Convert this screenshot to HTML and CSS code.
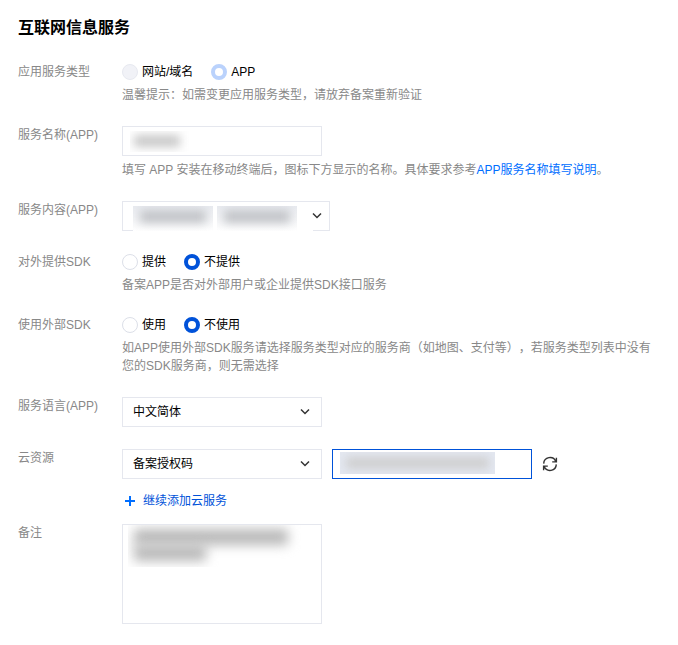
FILE: index.html
```html
<!DOCTYPE html>
<html lang="zh-CN">
<head>
<meta charset="utf-8">
<meta name="viewport" content="width=device-width, initial-scale=1">
<title>互联网信息服务</title>
<link rel="stylesheet" href="styles.css">
</head>
<body>
<form class="form">
  <h1 class="title">互联网信息服务</h1>

  <div class="row" role="radiogroup" aria-labelledby="l-type">
    <span class="label" id="l-type">应用服务类型</span>
    <div class="field">
      <div class="radios">
        <label class="radio"><input type="radio" name="type" disabled>网站/域名</label>
        <label class="radio"><input type="radio" name="type" checked disabled>APP</label>
      </div>
      <p class="hint">温馨提示：如需变更应用服务类型，请放弃备案重新验证</p>
    </div>
  </div>

  <div class="row">
    <label class="label" for="name">服务名称(APP)</label>
    <div class="field">
      <div class="box">
        <input class="control" id="name" type="text">
        <span class="redact redact-name"></span>
      </div>
      <p class="hint">填写 APP 安装在移动终端后，图标下方显示的名称。具体要求参考<a href="#">APP服务名称填写说明</a>。</p>
    </div>
  </div>

  <div class="row">
    <label class="label" for="content">服务内容(APP)</label>
    <div class="field">
      <div class="box box-wide">
        <select class="control" id="content"><option></option></select>
        <span class="tags"><i></i><i></i></span>
        <svg class="chevron" viewBox="0 0 10 8"><path d="M1 1.5 5 5.5 9 1.5"/></svg>
      </div>
    </div>
  </div>

  <div class="row" role="radiogroup" aria-labelledby="l-offer">
    <span class="label" id="l-offer">对外提供SDK</span>
    <div class="field">
      <div class="radios">
        <label class="radio"><input type="radio" name="offer">提供</label>
        <label class="radio"><input type="radio" name="offer" checked>不提供</label>
      </div>
      <p class="hint">备案APP是否对外部用户或企业提供SDK接口服务</p>
    </div>
  </div>

  <div class="row" role="radiogroup" aria-labelledby="l-use">
    <span class="label" id="l-use">使用外部SDK</span>
    <div class="field">
      <div class="radios">
        <label class="radio"><input type="radio" name="use">使用</label>
        <label class="radio"><input type="radio" name="use" checked>不使用</label>
      </div>
      <p class="hint">如APP使用外部SDK服务请选择服务类型对应的服务商（如地图、支付等），若服务类型列表中没有您的SDK服务商，则无需选择</p>
    </div>
  </div>

  <div class="row">
    <label class="label" for="lang">服务语言(APP)</label>
    <div class="field">
      <div class="box">
        <select class="control" id="lang"><option>中文简体</option></select>
        <svg class="chevron" viewBox="0 0 10 8"><path d="M1 1.5 5 5.5 9 1.5"/></svg>
      </div>
    </div>
  </div>

  <div class="row row-tight">
    <label class="label" for="cloud">云资源</label>
    <div class="field">
      <div class="line">
        <div class="box">
          <select class="control" id="cloud"><option>备案授权码</option></select>
          <svg class="chevron" viewBox="0 0 10 8"><path d="M1 1.5 5 5.5 9 1.5"/></svg>
        </div>
        <div class="box">
          <input class="control active" type="text" aria-label="备案授权码">
          <span class="redact redact-code"></span>
        </div>
        <button class="refresh" type="button" aria-label="刷新">
          <svg viewBox="0 0 16 16"><path d="M1.7 7.6A6.3 6.3 0 0 1 13.8 5.4M14.3 8.4A6.3 6.3 0 0 1 2.2 10.6M14.4 1.8v4.1h-4.2M1.6 14.2v-4.1h4.2"/></svg>
        </button>
      </div>
      <button class="add" type="button">
        <svg viewBox="0 0 10 10"><path d="M5 0v10M0 5h10"/></svg>继续添加云服务
      </button>
    </div>
  </div>

  <div class="row">
    <label class="label" for="note">备注</label>
    <div class="field">
      <div class="box">
        <textarea class="control area" id="note"></textarea>
        <span class="smudge"><i></i><i></i></span>
      </div>
    </div>
  </div>
</form>
</body>
</html>
```
FILE: styles.css
```css
* {
  box-sizing: border-box;
}

body {
  margin: 0;
  background: #fff;
  color: #000;
  font: 12px/18px "Liberation Sans", "Noto Sans CJK SC", sans-serif;
  text-spacing-trim: space-all;
}

input,
select,
textarea,
button {
  margin: 0;
  font: inherit;
  color: inherit;
}

.form {
  padding: 16px 18px 21px;
}

.title {
  margin: 0 0 23px;
  font-size: 16px;
  line-height: 24px;
  font-weight: 700;
}

.row {
  display: grid;
  grid-template-columns: 104px minmax(0, 1fr);
  margin-bottom: 22px;
}

.row-tight {
  margin-bottom: 14px;
}

.row:last-child {
  margin-bottom: 0;
}

.label,
.hint {
  color: #888;
}

.hint {
  margin: 5px 0 0;
}

a {
  color: #006eff;
  text-decoration: none;
}

.radios {
  display: flex;
  gap: 18px;
}

.radio {
  display: flex;
  align-items: center;
  gap: 4px;
}

.radio input {
  appearance: none;
  width: 16px;
  height: 16px;
  border: 1px solid #dcdfe8;
  border-radius: 50%;
  background: #fff;
}

.radio input:disabled {
  border-color: #e7e9f0;
  background: #f1f2f7;
}

.radio input:checked {
  border: 4px solid #0052d9;
  background: #fff;
}

.radio input:checked:disabled {
  border-color: #bad2fc;
}

.line {
  display: flex;
  align-items: center;
  gap: 10px;
}

.box {
  position: relative;
  width: 200px;
}

.box-wide {
  width: 208px;
}

.control {
  display: block;
  appearance: none;
  width: 100%;
  height: 30px;
  padding: 0 10px;
  border: 1px solid #e5e7ee;
  border-radius: 0;
  outline: none;
  background: #fff;
}

.active {
  border-color: #0052d9;
}

.area {
  height: 100px;
  resize: none;
}

.chevron {
  position: absolute;
  top: 11px;
  right: 12px;
  width: 10px;
  height: 8px;
  fill: none;
  stroke: #333;
  stroke-width: 1.5;
  pointer-events: none;
}

.box-wide .chevron {
  right: 8px;
}

.redact,
.tags,
.smudge {
  position: absolute;
  overflow: hidden;
  pointer-events: none;
}

.redact-name {
  top: 5px;
  left: 8px;
  width: 60px;
  height: 21px;
}

.redact-code {
  top: 3px;
  left: 8px;
  width: 155px;
  height: 22px;
  background: #e4e8f1;
}

.redact::after,
.tags i::after {
  content: "";
  position: absolute;
  inset: 5px 6px;
  background: #cfcfcf;
  filter: blur(5px);
}

.redact-name::after {
  inset: 4px 10px 5px 4px;
  background: #c8c8c8;
}

.tags {
  top: 5px;
  left: 11px;
  display: flex;
  gap: 4px;
  width: 180px;
  height: 25px;
  background: #fff;
}

.tags i {
  position: relative;
  width: 80px;
  height: 25px;
  overflow: hidden;
  background: linear-gradient(#e9ebf0, #f5f6f8 60%, #fff);
}

.tags i::after {
  inset: 4px 7px 8px;
  background: #c2c4c8;
}

.smudge {
  top: 1px;
  left: 6px;
  width: 182px;
  height: 42px;
}

.smudge i {
  display: block;
  width: 154px;
  height: 16px;
  margin: 4px 0 0 6px;
  background: #b8b8b8;
  filter: blur(6px);
}

.smudge i + i {
  width: 72px;
  margin-top: 0;
}

.refresh,
.add {
  display: flex;
  align-items: center;
  padding: 0;
  border: 0;
  background: none;
}

.refresh svg {
  width: 16px;
  height: 16px;
  fill: none;
  stroke: #333;
  stroke-width: 1.4;
}

.add {
  gap: 8px;
  margin-top: 13px;
  padding-left: 3px;
  color: #0052d9;
}

.add svg {
  width: 10px;
  height: 10px;
  stroke: #006eff;
  stroke-width: 2;
}
```
